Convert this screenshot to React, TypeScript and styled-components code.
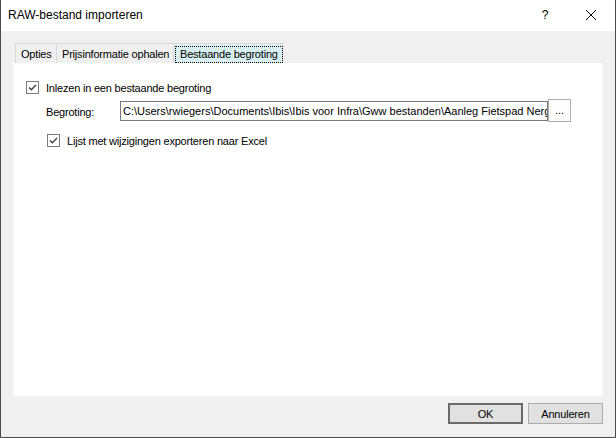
import React from 'react';
import styled, { createGlobalStyle } from 'styled-components';

const GlobalStyle = createGlobalStyle`
  html, body {
    margin: 0;
    padding: 0;
    background: #ffffff;
  }
  body {
    font-family: "Liberation Sans", Arial, sans-serif;
    font-size: 11px;
    color: #000;
  }
`;

const tabs = [
  { label: 'Opties', width: 42 },
  { label: 'Prijsinformatie ophalen', width: 118 },
  { label: 'Bestaande begroting', width: 110, active: true },
];

const CheckMark = () => (
  <svg width="11" height="11" viewBox="0 0 11 11">
    <path d="M2 5.5 L4.3 7.8 L9 3" fill="none" stroke="#3c3c3c" strokeWidth="1.3" />
  </svg>
);

const CloseIcon = () => (
  <svg width="10" height="10" viewBox="0 0 10 10">
    <path d="M0 0 L10 10 M10 0 L0 10" stroke="#000" strokeWidth="1" />
  </svg>
);

const App: React.FC = () => {
  return (
    <>
      <GlobalStyle />
      <Window>
        <TitleBar>
          <Title>RAW-bestand importeren</Title>
          <TitleButtons>
            <HelpGlyph>?</HelpGlyph>
            <CloseButton>
              <CloseIcon />
            </CloseButton>
          </TitleButtons>
        </TitleBar>

        <Body>
          <TabStrip>
            {tabs.map((t) => (
              <Tab key={t.label} $width={t.width} $active={!!t.active}>
                {t.active ? <FocusRect>{t.label}</FocusRect> : t.label}
              </Tab>
            ))}
          </TabStrip>

          <TabPage>
            <CheckRow>
              <CheckBox>
                <CheckMark />
              </CheckBox>
              <span>Inlezen in een bestaande begroting</span>
            </CheckRow>

            <FieldRow>
              <FieldLabel>Begroting:</FieldLabel>
              <PathBox>
                C:\Users\rwiegers\Documents\Ibis\Ibis voor Infra\Gww bestanden\Aanleg Fietspad Nerg
              </PathBox>
              <BrowseButton>...</BrowseButton>
            </FieldRow>

            <CheckRow $indent>
              <CheckBox>
                <CheckMark />
              </CheckBox>
              <span>Lijst met wijzigingen exporteren naar Excel</span>
            </CheckRow>
          </TabPage>

          <Footer>
            <DialogButton $default>OK</DialogButton>
            <DialogButton>Annuleren</DialogButton>
          </Footer>
        </Body>
      </Window>
    </>
  );
};

export default App;

// Styled components
const Window = styled.div`
  width: 616px;
  height: 438px;
  box-sizing: border-box;
  border: 1px solid #4c4c4c;
  border-top: none;
  display: flex;
  flex-direction: column;
  background: #f0f0f0;
`;

const TitleBar = styled.div`
  height: 31px;
  flex: none;
  background: #fff;
  display: flex;
  align-items: center;
  justify-content: space-between;
  padding-left: 7px;
`;

const Title = styled.div`
  font-size: 12px;
  color: #000;
  margin-top: -1px;
`;

const TitleButtons = styled.div`
  display: flex;
  align-items: center;
  height: 100%;
`;

const HelpGlyph = styled.div`
  width: 46px;
  text-align: center;
  font-size: 12px;
  margin-top: -1px;
`;

const CloseButton = styled.div`
  width: 46px;
  height: 100%;
  display: flex;
  align-items: center;
  justify-content: center;
  margin-right: 1px;
  svg {
    margin-top: -1px;
  }
`;

const Body = styled.div`
  flex: 1;
  display: flex;
  flex-direction: column;
  padding: 12px 11px 0 12px;
`;

const TabStrip = styled.div`
  display: flex;
  height: 20px;
  padding-left: 2px;
`;

const Tab = styled.div<{ $width: number; $active: boolean }>`
  width: ${(p) => p.$width}px;
  box-sizing: border-box;
  height: 20px;
  border: 1px solid #d9d9d9;
  border-bottom: none;
  margin-right: -1px;
  background: ${(p) => (p.$active ? '#d8f0f2' : '#f0f0f0')};
  display: flex;
  align-items: center;
  padding-left: ${(p) => (p.$active ? 1 : 5)}px;
  padding-top: 1px;
  letter-spacing: -0.2px;
  white-space: nowrap;
  position: relative;
  z-index: ${(p) => (p.$active ? 1 : 0)};
`;

const FocusRect = styled.span`
  display: block;
  border: 1px dotted #000;
  padding: 1px 4px 1px 4px;
  line-height: 13px;
`;

const TabPage = styled.div`
  width: 590px;
  height: 333px;
  background: #fff;
  box-sizing: border-box;
  padding: 18px 0 0 13px;
  display: flex;
  flex-direction: column;
`;

const CheckRow = styled.div<{ $indent?: boolean }>`
  display: flex;
  align-items: center;
  gap: 7px;
  height: 13px;
  margin-left: ${(p) => (p.$indent ? 21 : 0)}px;
  margin-top: ${(p) => (p.$indent ? 12 : 0)}px;
  letter-spacing: -0.2px;
  white-space: nowrap;
`;

const CheckBox = styled.div`
  width: 13px;
  height: 13px;
  box-sizing: border-box;
  border: 1px solid #7a7a7a;
  background: #fff;
  display: flex;
  align-items: center;
  justify-content: center;
  flex: none;
`;

const FieldRow = styled.div`
  display: flex;
  align-items: center;
  height: 23px;
  margin-top: 5px;
  padding-left: 20px;
`;

const FieldLabel = styled.div`
  width: 74px;
  letter-spacing: -0.2px;
  padding-top: 2px;
`;

const PathBox = styled.div`
  width: 428px;
  height: 20px;
  box-sizing: border-box;
  border: 1px solid #7a7a7a;
  background: #fff;
  padding: 0 2px;
  display: flex;
  align-items: center;
  overflow: hidden;
  white-space: nowrap;
`;

const BrowseButton = styled.div`
  width: 23px;
  height: 23px;
  box-sizing: border-box;
  border: 1px solid #adadad;
  background: #fdfdfd;
  display: flex;
  align-items: center;
  justify-content: center;
  padding-bottom: 2px;
`;

const Footer = styled.div`
  display: flex;
  justify-content: flex-end;
  gap: 5px;
  margin-top: 7px;
  width: 590px;
`;

const DialogButton = styled.div<{ $default?: boolean }>`
  width: 75px;
  height: 21px;
  box-sizing: border-box;
  border: ${(p) => (p.$default ? '2px solid #6b6b6b' : '1px solid #adadad')};
  background: #e1e1e1;
  display: flex;
  align-items: center;
  justify-content: center;
  letter-spacing: -0.2px;
`;
